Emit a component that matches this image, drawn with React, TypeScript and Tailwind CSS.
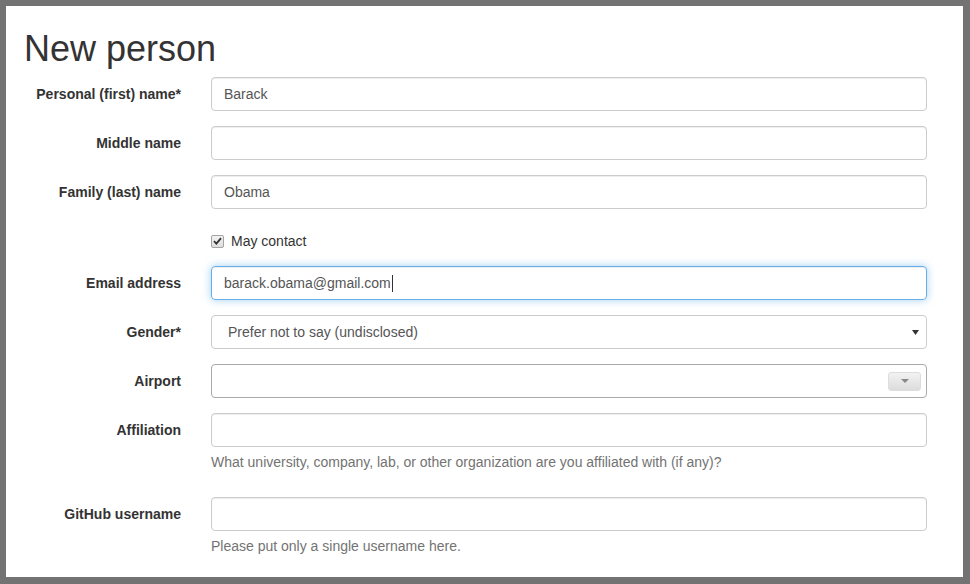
import type { ReactNode } from 'react';

const font = { fontFamily: '"Liberation Sans", Arial, Helvetica, sans-serif' };

function Row({ label, children, help }: { label: string; children: ReactNode; help?: string }) {
  return (
    <div className="flex mb-[15px]">
      <label className="w-[157px] shrink-0 text-right font-bold text-[14px] leading-[20px] pt-[7px] text-[#333]">{label}</label>
      <div className="ml-[30px] w-[716px]">
        {children}
        {help && <p className="mt-[5px] mb-[10px] text-[14px] leading-[20px] text-[#737373]">{help}</p>}
      </div>
    </div>
  );
}

function TextInput({ value = '' }: { value?: string }) {
  return (
    <input
      readOnly
      value={value}
      className="block w-full h-[34px] px-[12px] border border-[#ccc] rounded-[4px] text-[14px] text-[#555] bg-white shadow-[inset_0_1px_1px_rgba(0,0,0,0.075)] outline-none"
      style={font}
    />
  );
}

export default function App() {
  return (
    <div className="w-[970px] h-[584px] bg-[#737373] pt-[6px] pl-[6px] pr-[7px] pb-[7px]" style={font}>
      <div className="w-full h-full bg-white pl-[18px] overflow-hidden">
        <h1 className="mt-[23px] mb-[8px] text-[36px] leading-[40px] text-[#333] font-normal">New person</h1>

        <Row label="Personal (first) name*"><TextInput value="Barack" /></Row>
        <Row label="Middle name"><TextInput /></Row>
        <Row label="Family (last) name"><TextInput value="Obama" /></Row>

        <div className="flex mb-[15px]">
          <div className="w-[157px] shrink-0" />
          <div className="ml-[30px] pt-[7px] h-[27px] flex items-center gap-[7px] text-[14px] leading-[20px] text-[#333]">
            <span className="w-[13px] h-[13px] rounded-[2px] border border-[#a3a3a3] bg-gradient-to-b from-[#f3f3f3] to-[#dedede] flex items-center justify-center">
              <svg width="9" height="8" viewBox="0 0 9 8">
                <path d="M1 4.2 L3.4 6.6 L8 1.2" fill="none" stroke="#333" strokeWidth="1.8" />
              </svg>
            </span>
            <span>May contact</span>
          </div>
        </div>

        <Row label="Email address">
          <div className="h-[34px] px-[12px] border border-[#66afe9] rounded-[4px] flex items-center text-[14px] text-[#555] shadow-[inset_0_1px_1px_rgba(0,0,0,0.075),0_0_8px_rgba(102,175,233,0.6)]">
            <span>barack.obama@gmail.com</span>
            <span className="w-px h-[17px] bg-[#333] ml-px" />
          </div>
        </Row>

        <Row label="Gender*">
          <div className="h-[34px] pl-[16px] pr-[7px] border border-[#ccc] rounded-[4px] flex items-center justify-between text-[14px] text-[#555]">
            <span>Prefer not to say (undisclosed)</span>
            <svg width="7" height="5" viewBox="0 0 7 5"><path d="M0 0 H7 L3.5 5 Z" fill="#333" /></svg>
          </div>
        </Row>

        <Row label="Airport">
          <div className="h-[34px] border border-[#aaa] rounded-[4px] flex items-center justify-end pr-[5px]">
            <div className="w-[33px] h-[19px] rounded-[3px] border border-[#ddd] bg-gradient-to-b from-[#f2f2f2] to-[#dcdcdc] flex items-center justify-center">
              <svg width="8" height="4" viewBox="0 0 8 4"><path d="M0 0 H8 L4 4 Z" fill="#888" /></svg>
            </div>
          </div>
        </Row>

        <Row label="Affiliation" help="What university, company, lab, or other organization are you affiliated with (if any)?">
          <TextInput />
        </Row>

        <Row label="GitHub username" help="Please put only a single username here.">
          <TextInput />
        </Row>
      </div>
    </div>
  );
}
